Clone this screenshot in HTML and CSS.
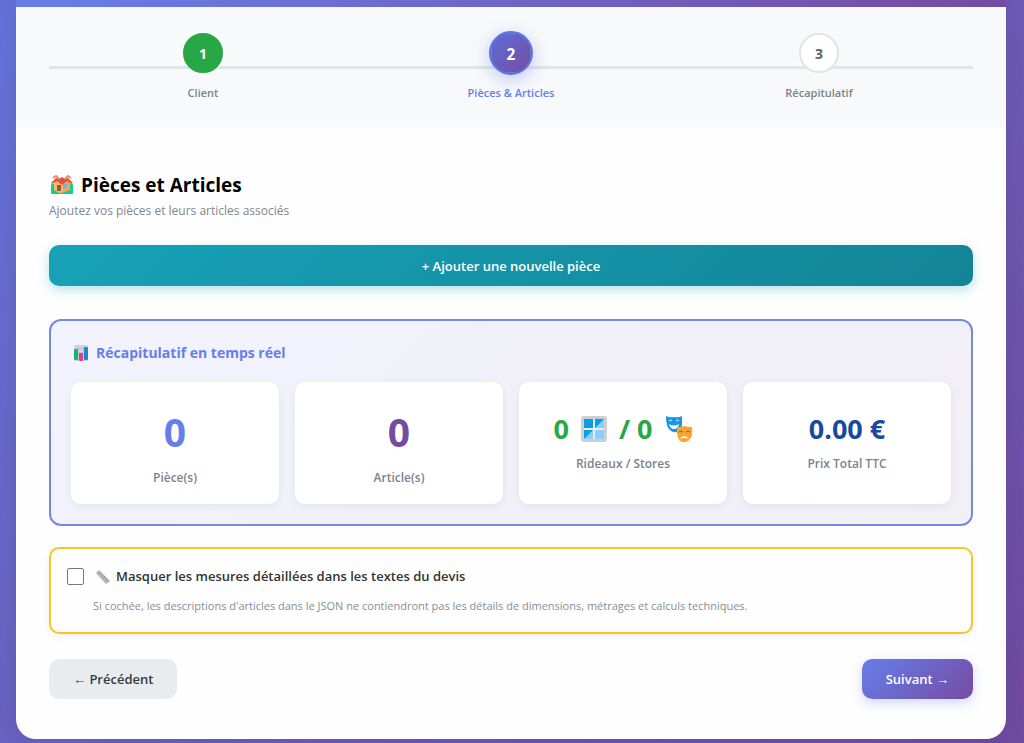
FILE: index.html
```
<!DOCTYPE html>
<html lang="fr">
<head>
  <meta charset="UTF-8" />
  <title>Devis - Pièces et Articles</title>
  <meta name="viewport" content="width=device-width, initial-scale=1.0" />
  <link rel="stylesheet" href="styles.css">
</head>
<body>
  <div class="container">
    <div class="header"></div>

    <ol class="stepper">
      <li class="step completed">
        <span class="step-circle">1</span>
        <span class="step-label">Client</span>
      </li>
      <li class="step active" aria-current="step">
        <span class="step-circle">2</span>
        <span class="step-label">Pièces &amp; Articles</span>
      </li>
      <li class="step">
        <span class="step-circle">3</span>
        <span class="step-label">Récapitulatif</span>
      </li>
    </ol>

    <main class="content">
      <h2 class="section-title">
        <svg class="icon-house" viewBox="0 0 22 20" aria-hidden="true">
          <rect y="9" width="22" height="10" rx="1" fill="#14cf83"/>
          <path d="M3 8L11 3l8 5v7l-8 3-8-3z" fill="#f3a35b"/>
          <path d="M3 9l5-4 4 5v7l-4 1-5-3z" fill="#ffb56b"/>
          <path d="M0 8l5-5 3 1 3-2 3 2 3-1 5 5-2 1-4-3-5 4-5-4-5 3z" fill="#e5513f"/>
          <path d="M2 3l3-2 3 3M14 4l3-3 3 2" fill="none" stroke="#f08a62" stroke-width="2"/>
          <rect x="6" y="10" width="4" height="6" fill="#8b5d45"/>
          <rect x="12" y="9" width="4" height="4" fill="#6bb6e0"/>
        </svg>
        Pièces et Articles
      </h2>
      <p class="section-subtitle">Ajoutez vos pièces et leurs articles associés</p>

      <button type="button" class="btn btn-add">+ Ajouter une nouvelle pièce</button>

      <section class="summary">
        <h3 class="summary-title">
          <svg class="icon-chart" viewBox="0 0 16 16" aria-hidden="true">
            <rect x="1" width="14" height="16" fill="#dcd3e6"/>
            <path d="M1 4h14M1 8h14M5 0v16M11 0v16" stroke="#bdb2ce" stroke-width="1"/>
            <rect x="1" y="4" width="4" height="11" rx="1" fill="#12b76a"/>
            <rect x="6" y="8" width="4" height="8" rx="1" fill="#e0408a"/>
            <rect x="11" y="2" width="4" height="13" rx="1" fill="#168bd2"/>
          </svg>
          Récapitulatif en temps réel
        </h3>
        <div class="stats">
          <div class="stat">
            <div class="stat-value large rooms">0</div>
            <div class="stat-label">Pièce(s)</div>
          </div>
          <div class="stat">
            <div class="stat-value large articles">0</div>
            <div class="stat-label">Article(s)</div>
          </div>
          <div class="stat">
            <div class="stat-value blinds">
              <span>0</span>
              <svg class="icon-window" viewBox="0 0 26 26" aria-hidden="true">
                <rect width="26" height="26" rx="3" fill="#cbd0d5"/>
                <rect x="3" y="3" width="20" height="20" fill="#e6edf3"/>
                <path d="M3 3h9v9H3zM14 3h9v9h-9zM3 14h9v9H3z" fill="#0b9de3"/>
                <path d="M23 3v9h-9zM12 14v9H3zM14 14h9v9h-9z" fill="#8dccff"/>
              </svg>
              <span>/ 0</span>
              <svg class="icon-masks" viewBox="0 0 28 28" aria-hidden="true">
                <path d="M1 1q4 2 8 1 4 1 8-1v9q0 5-5 7-4 1-7-2-4-3-4-14z" fill="#1597e5"/>
                <path d="M4 6q2-2 3 0M11 6q2-2 3 0" fill="none" stroke="#e7f6ff" stroke-width="1"/>
                <path d="M4 9q5 3 10 0-1 5-5 5t-5-5z" fill="#fff"/>
                <path d="M12 12q4 0 7-1 4 1 8 1 1 9-2 12-3 4-8 3-6-2-5-15z" fill="#fba42f"/>
                <path d="M14 17q2-2 4 0M21 17q2-2 4 0" fill="none" stroke="#a45b21" stroke-width="1"/>
                <path d="M15 24q4-6 9 0-4-2-9 0z" fill="#fff"/>
              </svg>
            </div>
            <div class="stat-label">Rideaux / Stores</div>
          </div>
          <div class="stat">
            <div class="stat-value price">0.00 €</div>
            <div class="stat-label">Prix Total TTC</div>
          </div>
        </div>
      </section>

      <div class="option">
        <label class="option-label" for="hide-measures">
          <input type="checkbox" id="hide-measures" aria-describedby="hide-help" />
          <svg class="icon-ruler" viewBox="0 0 16 16" aria-hidden="true">
            <path d="M4 1l11 11-4 3L1 4z" fill="#b3b3b3"/>
            <path d="M6 3L5 4M8 5L7 6M10 7L9 8M12 9l-1 1M14 11l-1 1" stroke="#8c8c8c" stroke-width="1"/>
          </svg>
          Masquer les mesures détaillées dans les textes du devis
        </label>
        <p class="option-help" id="hide-help">Si cochée, les descriptions d'articles dans le JSON ne contiendront pas les détails de dimensions, métrages et calculs techniques.</p>
      </div>

      <div class="button-container">
        <button type="button" class="btn btn-prev">← Précédent</button>
        <button type="button" class="btn btn-next">Suivant →</button>
      </div>
    </main>
  </div>
</body>
</html>
```

FILE: styles.css
```
* {
  box-sizing: border-box;
  margin: 0;
  padding: 0;
}
body {
  font-family: 'Segoe UI', 'Open Sans', sans-serif;
  min-height: 100vh;
  padding: 0 18px 4px 16px;
  background: linear-gradient(135deg, #6372d8 0%, #6f4a9e 100%);
  color: #333;
}
.container {
  background-color: #fefefe;
  border-radius: 0 0 20px 20px;
  overflow: hidden;
  box-shadow: 0 0 20px rgba(0, 0, 0, 0.08);
}
.header {
  height: 7px;
  background: linear-gradient(135deg, #667eea 0%, #764ba2 100%);
}

/* étapes */
.stepper {
  position: relative;
  display: flex;
  list-style: none;
  padding: 26px 33px 24px;
  background-color: #f8f9fa;
}
.stepper::before {
  content: "";
  position: absolute;
  top: 59px;
  left: 33px;
  right: 33px;
  height: 3px;
  background-color: #e1e4e8;
}
.step {
  position: relative;
  flex: 1;
  display: flex;
  flex-direction: column;
  align-items: center;
  gap: 10px;
}
.step-circle {
  display: flex;
  align-items: center;
  justify-content: center;
  width: 40px;
  height: 40px;
  border: 2px solid #e1e4e8;
  border-radius: 50%;
  background-color: #fff;
  color: #5a6268;
  font-size: 14px;
  font-weight: 700;
}
.step-label {
  font-size: 11px;
  line-height: 20px;
  font-weight: 600;
  color: #7b838a;
}
.step.completed .step-circle {
  background-color: #28a745;
  border-color: #28a745;
  color: #fff;
}
.step.active .step-circle {
  background: linear-gradient(135deg, #5c6fd8 0%, #764ba2 100%) border-box;
  border-color: #5f74e0;
  color: #fff;
  transform: scale(1.1);
  box-shadow: 0 4px 15px rgba(102, 126, 234, 0.4);
}
.step.active .step-label {
  color: #667eea;
}

.content {
  padding: 44px 33px 40px;
}
.section-title {
  display: flex;
  align-items: center;
  gap: 8px;
  padding-left: 2px;
  font-size: 19px;
  line-height: 28px;
  color: #000;
}
.icon-house {
  width: 22px;
  height: 20px;
}
.section-subtitle {
  margin: 2px 0 24px;
  font-size: 12px;
  line-height: 20px;
  color: #7f878e;
}

.btn {
  height: 40px;
  padding: 0 24px;
  border: none;
  border-radius: 10px;
  font-family: inherit;
  font-size: 13px;
  font-weight: 600;
  cursor: pointer;
}
.btn-add {
  display: block;
  width: 100%;
  height: 41px;
  margin-bottom: 33px;
  background: linear-gradient(135deg, #17a2b8 0%, #138496 100%);
  color: #fff;
  box-shadow: 0 4px 12px rgba(23, 162, 184, 0.3);
}

/* récapitulatif */
.summary {
  margin-bottom: 21px;
  padding: 20px;
  border: 2px solid #7588e2;
  border-radius: 12px;
  background: linear-gradient(135deg, #f1f3fd 0%, #f1eef6 100%);
}
.summary-title {
  display: flex;
  align-items: center;
  gap: 7px;
  margin-bottom: 17px;
  padding-left: 2px;
  font-size: 14px;
  line-height: 24px;
  color: #667eea;
}
.icon-chart {
  width: 16px;
  height: 16px;
}
.stats {
  display: grid;
  grid-template-columns: repeat(4, 1fr);
  gap: 16px;
}
.stat {
  padding: 22px 16px 16px;
  border-radius: 10px;
  background-color: #fff;
  text-align: center;
  box-shadow: 0 2px 8px rgba(0, 0, 0, 0.06);
}
.stat-value {
  font-size: 27px;
  line-height: 50px;
  font-weight: 700;
}
.stat-value.large {
  margin-bottom: 8px;
  font-size: 39px;
  line-height: 56px;
}
.rooms {
  color: #667eea;
}
.articles {
  color: #764ba2;
}
.blinds {
  display: flex;
  align-items: center;
  justify-content: center;
  gap: 12px;
  color: #28a745;
}
.price {
  color: #1749a0;
}
.icon-window {
  width: 26px;
  height: 26px;
}
.icon-masks {
  width: 28px;
  height: 28px;
}
.stat-label {
  font-size: 12px;
  line-height: 20px;
  font-weight: 600;
  color: #7b838a;
}

.option {
  margin-bottom: 25px;
  padding: 16px;
  border: 2px solid #f9c425;
  border-radius: 10px;
  box-shadow: 0 2px 8px rgba(0, 0, 0, 0.06);
}
.option-label {
  display: flex;
  align-items: center;
  font-size: 13px;
  line-height: 23px;
  font-weight: 600;
  cursor: pointer;
}
.option-label input {
  appearance: none;
  width: 17px;
  height: 17px;
  border: 1px solid #777;
  border-radius: 2px;
  background-color: #fff;
}
.option-label input:checked {
  background-color: #667eea;
}
.icon-ruler {
  width: 16px;
  height: 16px;
  margin: 0 5px 0 11px;
}
.option-help {
  margin: 8px 0 0 26px;
  font-size: 11px;
  line-height: 20px;
  color: #868e95;
}

.button-container {
  display: flex;
  justify-content: space-between;
}
.btn-prev {
  background-color: #e9ecef;
  color: #353a40;
}
.btn-next {
  background: linear-gradient(135deg, #667eea 0%, #764ba2 100%);
  color: #fff;
  box-shadow: 0 4px 12px rgba(102, 126, 234, 0.3);
}
```
